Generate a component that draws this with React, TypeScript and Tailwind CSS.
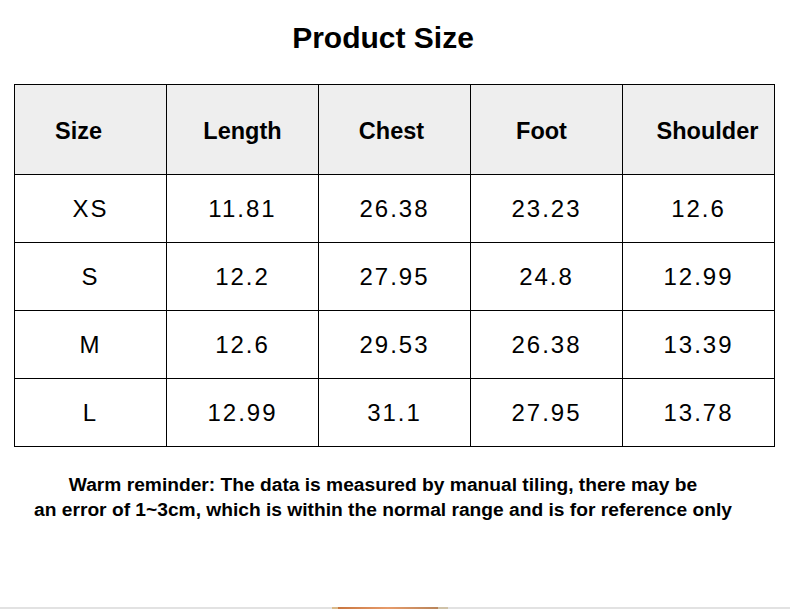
import React from "react";

const headers: { label: string; cls: string }[] = [
  { label: "Size", cls: "pr-[24px]" },
  { label: "Length", cls: "" },
  { label: "Chest", cls: "pr-[6px]" },
  { label: "Foot", cls: "pr-[10px]" },
  { label: "Shoulder", cls: "pl-[18px]" },
];

const rows = [
  ["XS", "11.81", "26.38", "23.23", "12.6"],
  ["S", "12.2", "27.95", "24.8", "12.99"],
  ["M", "12.6", "29.53", "26.38", "13.39"],
  ["L", "12.99", "31.1", "27.95", "13.78"],
];

export default function App() {
  return (
    <div
      className="relative w-[790px] h-[609px] bg-white text-black overflow-hidden"
      style={{ fontFamily: '"Liberation Sans", Arial, sans-serif' }}
    >
      <div className="h-[84px] pt-[23px] pr-[24px] text-center font-bold text-[30px] leading-[30px]">
        Product Size
      </div>
      <div className="ml-[14px] w-[761px] border-l border-t border-black grid grid-cols-[repeat(5,152px)]">
        {headers.map((h) => (
          <div
            key={h.label}
            className={`h-[90px] bg-[#eeeeee] border-r border-b border-black flex items-center justify-center pt-[4px] font-bold text-[23.5px] ${h.cls}`}
          >
            {h.label}
          </div>
        ))}
        {rows.map((r, i) =>
          r.map((c, j) => (
            <div
              key={`${i}-${j}`}
              className="h-[68px] border-r border-b border-black flex items-center justify-center text-[24px] tracking-[2px]"
            >
              {c}
            </div>
          ))
        )}
      </div>
      <div className="mt-[25px] pr-[24px] text-center font-bold text-[19.2px] leading-[25px]">
        <div>Warm reminder: The data is measured by manual tiling, there may be</div>
        <div>an error of 1~3cm, which is within the normal range and is for reference only</div>
      </div>
      <div className="absolute left-0 right-0 bottom-0 h-[2px] bg-[#e2e2e2] flex">
        <div className="ml-[332px] w-[6px] h-full bg-[#d9b98a]" />
        <div className="w-[100px] h-full bg-gradient-to-r from-[#c9763f] via-[#e79b6a] to-[#b8845a]" />
        <div className="w-[10px] h-full bg-[#cfc2a8]" />
      </div>
    </div>
  );
}
